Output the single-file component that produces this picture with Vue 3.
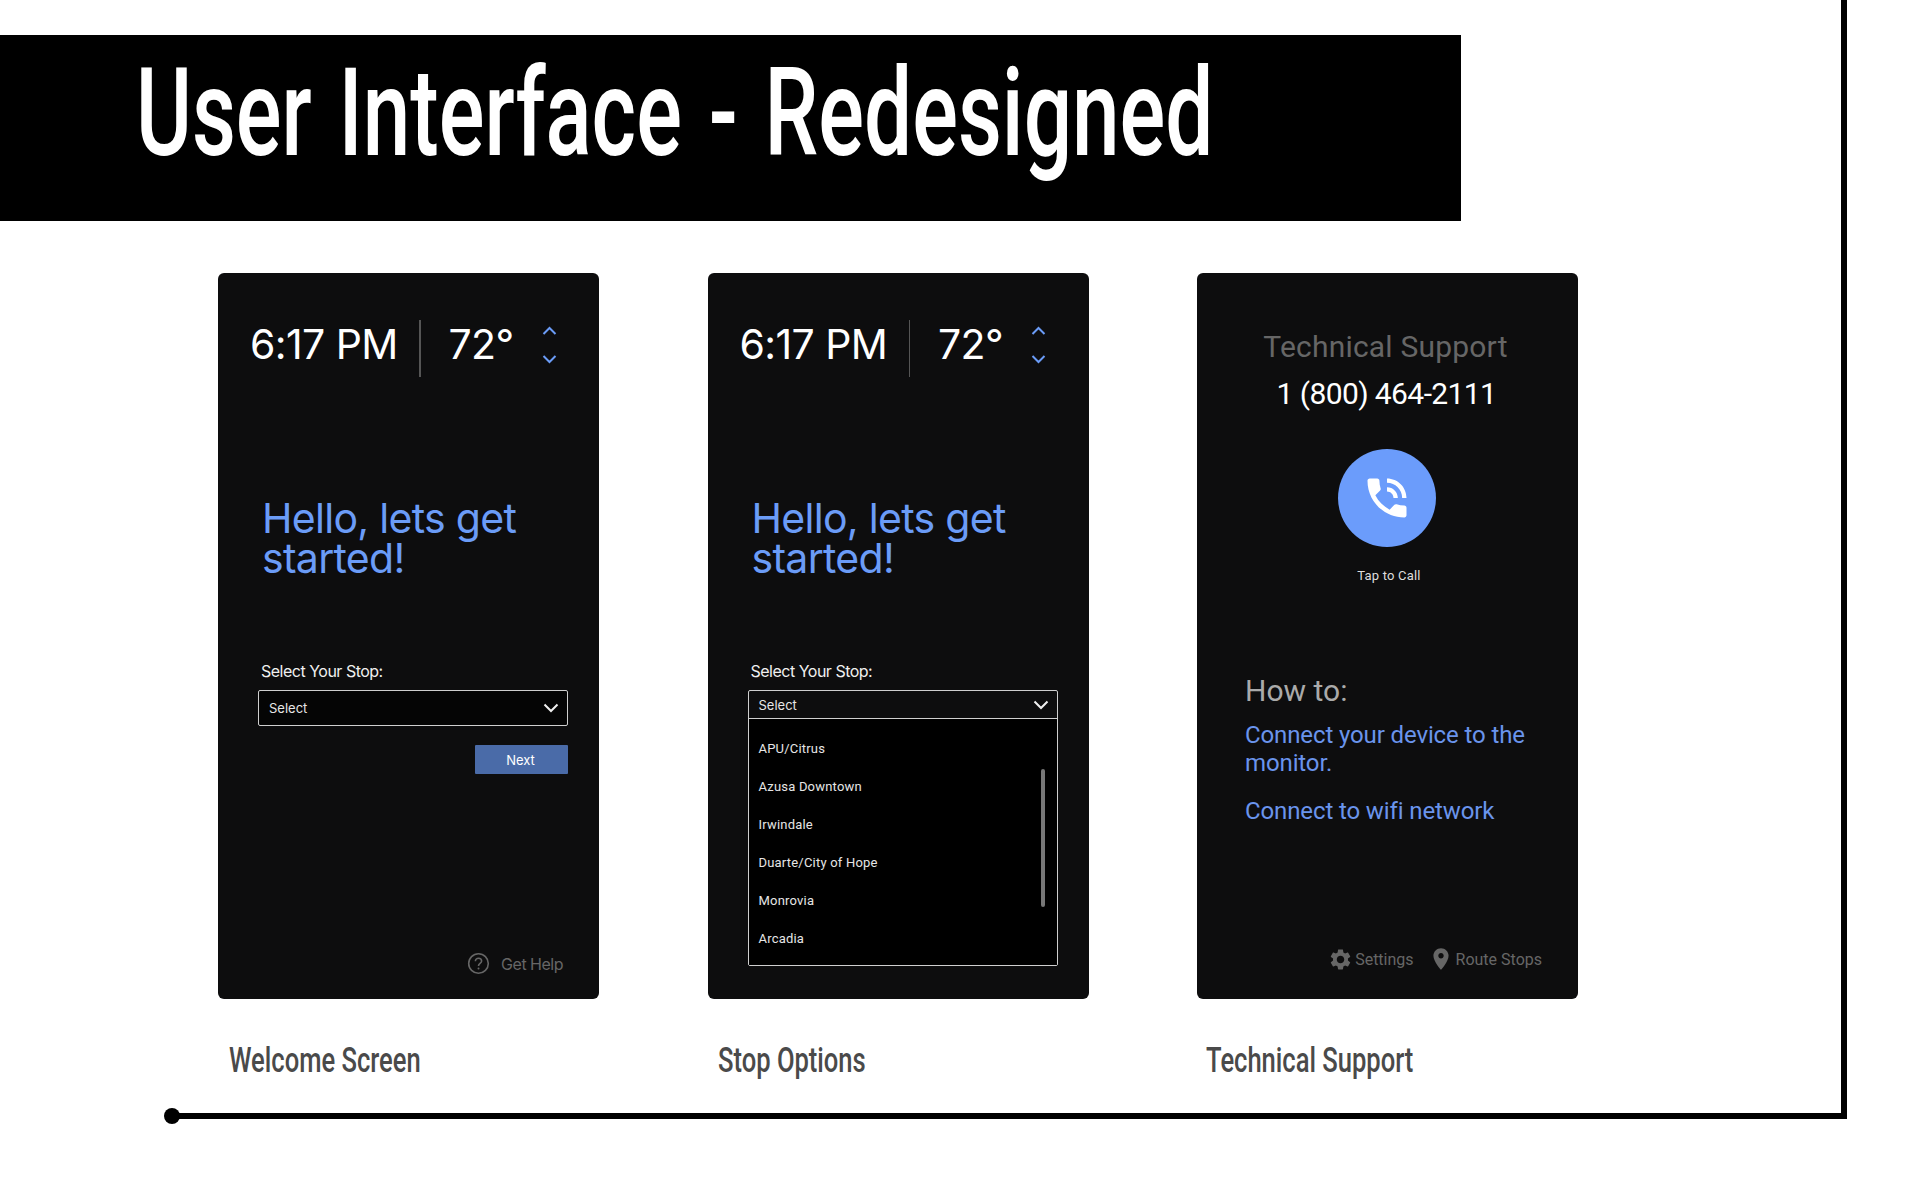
<template>
  <div class="page">
    <div class="frame"><span class="frame-dot"></span></div>

    <header class="banner">
      <h1>User Interface - Redesigned</h1>
    </header>

    <main class="screens">
      <section class="screen">
        <div class="card card-welcome">
          <div class="status">
            <span class="time">6:17 PM</span>
            <span class="divider"></span>
            <span class="temp">72°</span>
            <span class="temp-arrows">
              <svg width="15" height="10" viewBox="0 0 15 10"><path d="M1.5 8 7.5 2l6 6" /></svg>
              <svg width="15" height="10" viewBox="0 0 15 10"><path d="M1.5 2l6 6 6-6" /></svg>
            </span>
          </div>
          <h2 class="hello">Hello, lets get<br />started!</h2>
          <label class="stop-label">Select Your Stop:</label>
          <div class="select">
            <span>Select</span>
            <svg width="16" height="10" viewBox="0 0 16 10"><path d="M1.5 1.5 8 8l6.5-6.5" /></svg>
          </div>
          <button class="next">Next</button>
          <div class="help">
            <svg width="23" height="23" viewBox="0 0 23 23">
              <circle cx="11.5" cy="11.5" r="9.8" />
              <path d="M8.4 9.2c0-1.9 1.4-3 3.1-3s3.1 1.1 3.1 2.8c0 2.5-3.1 2.4-3.1 4.9" />
              <circle class="help-dot" cx="11.5" cy="16.6" r="1" />
            </svg>
            <span>Get Help</span>
          </div>
        </div>
        <p class="caption">Welcome Screen</p>
      </section>

      <section class="screen">
        <div class="card">
          <div class="status">
            <span class="time">6:17 PM</span>
            <span class="divider"></span>
            <span class="temp">72°</span>
            <span class="temp-arrows">
              <svg width="15" height="10" viewBox="0 0 15 10"><path d="M1.5 8 7.5 2l6 6" /></svg>
              <svg width="15" height="10" viewBox="0 0 15 10"><path d="M1.5 2l6 6 6-6" /></svg>
            </span>
          </div>
          <h2 class="hello">Hello, lets get<br />started!</h2>
          <label class="stop-label">Select Your Stop:</label>
          <div class="dropdown">
            <div class="dropdown-head">
              <span>Select</span>
              <svg width="16" height="10" viewBox="0 0 16 10"><path d="M1.5 1.5 8 8l6.5-6.5" /></svg>
            </div>
            <ul class="dropdown-list">
              <li v-for="stop in stops" :key="stop">{{ stop }}</li>
              <span class="scrollbar"></span>
            </ul>
          </div>
        </div>
        <p class="caption">Stop Options</p>
      </section>

      <section class="screen">
        <div class="card card-support">
          <h2 class="support-title">Technical Support</h2>
          <p class="support-phone">1 (800) 464-2111</p>
          <div class="call-button">
            <svg width="52" height="52" viewBox="0 0 24 24">
              <path d="M20 15.5c-1.25 0-2.45-.2-3.57-.57-.35-.11-.74-.03-1.02.24l-2.2 2.2c-2.83-1.44-5.15-3.75-6.59-6.59l2.2-2.21c.28-.26.36-.65.25-1C8.7 6.45 8.5 5.25 8.5 4c0-.55-.45-1-1-1H4c-.55 0-1 .45-1 1 0 9.39 7.61 17 17 17 .55 0 1-.45 1-1v-3.5c0-.55-.45-1-1-1zM19 12h2c0-4.97-4.03-9-9-9v2c3.87 0 7 3.13 7 7zm-4 0h2c0-2.76-2.24-5-5-5v2c1.66 0 3 1.34 3 3z" />
            </svg>
          </div>
          <p class="tap">Tap to Call</p>
          <div class="howto">
            <h3>How to:</h3>
            <a>Connect your device to the monitor.</a>
            <a>Connect to wifi network</a>
          </div>
          <div class="support-footer">
            <span class="footer-item">
              <svg width="25" height="25" viewBox="0 0 24 24">
                <path d="M19.14 12.94c.04-.3.06-.61.06-.94 0-.32-.02-.64-.07-.94l2.03-1.58c.18-.14.23-.41.12-.61l-1.92-3.32c-.12-.22-.37-.29-.59-.22l-2.39.96c-.5-.38-1.03-.7-1.62-.94l-.36-2.54c-.04-.24-.24-.41-.48-.41h-3.84c-.24 0-.43.17-.47.41l-.36 2.54c-.59.24-1.13.57-1.62.94l-2.39-.96c-.22-.08-.47 0-.59.22L2.74 8.87c-.12.21-.08.47.12.61l2.03 1.58c-.05.3-.09.63-.09.94s.02.64.07.94l-2.03 1.58c-.18.14-.23.41-.12.61l1.92 3.32c.12.22.37.29.59.22l2.39-.96c.5.38 1.03.7 1.62.94l.36 2.54c.05.24.24.41.48.41h3.84c.24 0 .44-.17.47-.41l.36-2.54c.59-.24 1.13-.56 1.62-.94l2.39.96c.22.08.47 0 .59-.22l1.92-3.32c.12-.22.07-.47-.12-.61l-2.01-1.58zM12 15.6c-1.98 0-3.6-1.62-3.6-3.6s1.62-3.6 3.6-3.6 3.6 1.62 3.6 3.6-1.62 3.6-3.6 3.6z" />
              </svg>
              Settings
            </span>
            <span class="footer-item">
              <svg width="26" height="26" viewBox="0 0 24 24">
                <path d="M12 2C8.13 2 5 5.13 5 9c0 5.25 7 13 7 13s7-7.75 7-13c0-3.87-3.13-7-7-7zm0 9.5c-1.38 0-2.5-1.12-2.5-2.5s1.12-2.5 2.5-2.5 2.5 1.12 2.5 2.5-1.12 2.5-2.5 2.5z" />
              </svg>
              Route Stops
            </span>
          </div>
        </div>
        <p class="caption">Technical Support</p>
      </section>
    </main>
  </div>
</template>

<script setup>
const stops = [
  "APU/Citrus",
  "Azusa Downtown",
  "Irwindale",
  "Duarte/City of Hope",
  "Monrovia",
  "Arcadia",
];
</script>

<style>
html,
body {
  background: #fff;
}
</style>

<style scoped>
.page {
  position: relative;
  width: 1920px;
  height: 1200px;
  padding-top: 35px;
  box-sizing: border-box;
  overflow: hidden;
  background: #fff;
  font-family: Inter, "Liberation Sans", sans-serif;
}

/* the L shaped line round the slide */
.frame {
  position: absolute;
  left: 172px;
  top: -10px;
  width: 1669px;
  height: 1123px;
  border-right: 6px solid #000;
  border-bottom: 6px solid #000;
}
.frame-dot {
  position: absolute;
  left: -8px;
  bottom: -11px;
  width: 16px;
  height: 16px;
  border-radius: 50%;
  background: #000;
}

.banner {
  width: 1461px;
  height: 186px;
  background: #000;
  padding: 18px 0 0 136px;
  box-sizing: border-box;
}
.banner h1 {
  margin: 0;
  display: inline-block;
  white-space: nowrap;
  font-family: Roboto, sans-serif;
  font-size: 122px;
  line-height: 122px;
  font-weight: 500;
  word-spacing: 8px;
  color: #fff;
  transform: scaleX(0.7);
  transform-origin: left top;
}

.screens {
  display: flex;
  gap: 108.5px;
  margin-top: 52px;
  padding-left: 218px;
}
.screen {
  width: 381px;
}

.card {
  display: flex;
  flex-direction: column;
  height: 726px;
  border-radius: 6px;
  background: #0d0d0e;
  box-sizing: border-box;
  padding-top: 47px;
}

.status {
  display: flex;
  height: 57px;
  padding-left: 32px;
  color: #fff;
  font-size: 41px;
  line-height: 48px;
  white-space: nowrap;
  letter-spacing: -0.6px;
}
.time {
  width: 145px;
}
.divider {
  width: 1.5px;
  height: 57px;
  margin-left: 24px;
  background: #555;
}
.temp {
  width: 78px;
  margin-left: 28px;
}
.temp-arrows {
  display: flex;
  flex-direction: column;
  gap: 18px;
  margin: 6px 0 0 15px;
}
.temp-arrows svg path {
  fill: none;
  stroke: #6b9cf7;
  stroke-width: 2;
}

.hello {
  margin: 121px 0 0 44px;
  font-size: 41px;
  line-height: 40px;
  font-weight: 400;
  letter-spacing: -0.7px;
  color: #6b9cf7;
}

.stop-label {
  margin: 83px 0 0 43px;
  font-size: 16px;
  line-height: 20px;
  letter-spacing: -0.5px;
  color: #f0f0f0;
}

.select,
.dropdown {
  width: 310px;
  margin: 9px 0 0 40px;
  box-sizing: border-box;
  border: 1.5px solid #cfcfcf;
  border-radius: 2px;
  color: #e6e6e6;
  font-size: 13px;
}
.select {
  display: flex;
  align-items: center;
  justify-content: space-between;
  height: 36px;
  padding: 0 8px 0 10px;
  background: #050505;
}
.select svg path,
.dropdown-head svg path {
  fill: none;
  stroke: #f0f0f0;
  stroke-width: 2;
}

.next {
  align-self: flex-end;
  width: 93px;
  height: 29px;
  margin: 19px 31px 0 0;
  padding-right: 8px;
  border: 0;
  border-radius: 1px;
  background: #4a6ba8;
  color: #fff;
  font-family: inherit;
  font-size: 13px;
}

.help {
  display: flex;
  align-items: center;
  justify-content: flex-end;
  gap: 11px;
  margin-top: auto;
  padding: 0 36px 24px 0;
  color: #666;
  font-size: 16px;
  letter-spacing: -0.5px;
}
.help svg circle,
.help svg path {
  fill: none;
  stroke: #666;
  stroke-width: 1.6;
}
.help svg .help-dot {
  fill: #666;
  stroke: none;
}

.dropdown-head {
  display: flex;
  align-items: center;
  justify-content: space-between;
  height: 28px;
  padding: 0 8px 0 10px;
  border-bottom: 1.5px solid #cfcfcf;
  box-sizing: border-box;
}
.dropdown-list {
  position: relative;
  height: 246px;
  margin: 0;
  padding: 11px 0 0 10px;
  box-sizing: border-box;
  background: #000;
  list-style: none;
  font-family: Roboto, sans-serif;
  letter-spacing: 0.2px;
}
.dropdown-list li {
  height: 38px;
  line-height: 38px;
}
.scrollbar {
  position: absolute;
  left: 292px;
  top: 50px;
  width: 4px;
  height: 138px;
  border-radius: 2px;
  background: #777;
}

.caption {
  margin: 42px 0 0 10px;
  display: inline-block;
  white-space: nowrap;
  font-family: Roboto, sans-serif;
  font-weight: 500;
  font-size: 35px;
  line-height: 40px;
  color: #4a4a4a;
  transform: scaleX(0.73);
  transform-origin: left top;
}
.screen:first-child .caption {
  margin-left: 11px;
}
.screen:last-child .caption {
  margin-left: 9px;
}

.card-support {
  align-items: center;
  padding: 56px 2px 0 0;
  font-family: Roboto, sans-serif;
}
.support-title,
.support-phone {
  margin: 0;
  font-size: 30px;
  line-height: 36px;
  font-weight: 400;
}
.support-title {
  padding-right: 2px;
  color: #666;
  letter-spacing: 0.2px;
}
.support-phone {
  margin-top: 11px;
  color: #fff;
  letter-spacing: -0.6px;
}
.call-button {
  display: flex;
  align-items: center;
  justify-content: center;
  width: 98px;
  height: 98px;
  margin-top: 37px;
  border-radius: 50%;
  background: #6b9cfb;
}
.call-button svg path {
  fill: #fff;
}
.tap {
  margin: 21px 0 0;
  padding-left: 5px;
  font-size: 13px;
  line-height: 16px;
  letter-spacing: 0.2px;
  color: #ddd;
}
.howto {
  align-self: flex-start;
  width: 300px;
  margin: 89px 0 0 48px;
}
.howto h3 {
  margin: 0;
  font-size: 30px;
  line-height: 36px;
  font-weight: 400;
  color: #aaa;
}
.howto a {
  display: block;
  margin-top: 12px;
  font-size: 24px;
  line-height: 28px;
  letter-spacing: -0.12px;
  color: #6a94ec;
}
.howto a + a {
  margin-top: 20px;
}
.support-footer {
  display: flex;
  align-self: flex-end;
  gap: 14px;
  margin-top: auto;
  padding: 0 34px 27px 0;
  color: #666;
  font-size: 16px;
}
.footer-item {
  display: flex;
  align-items: center;
  gap: 2px;
}
.footer-item svg path {
  fill: #666;
}
</style>
